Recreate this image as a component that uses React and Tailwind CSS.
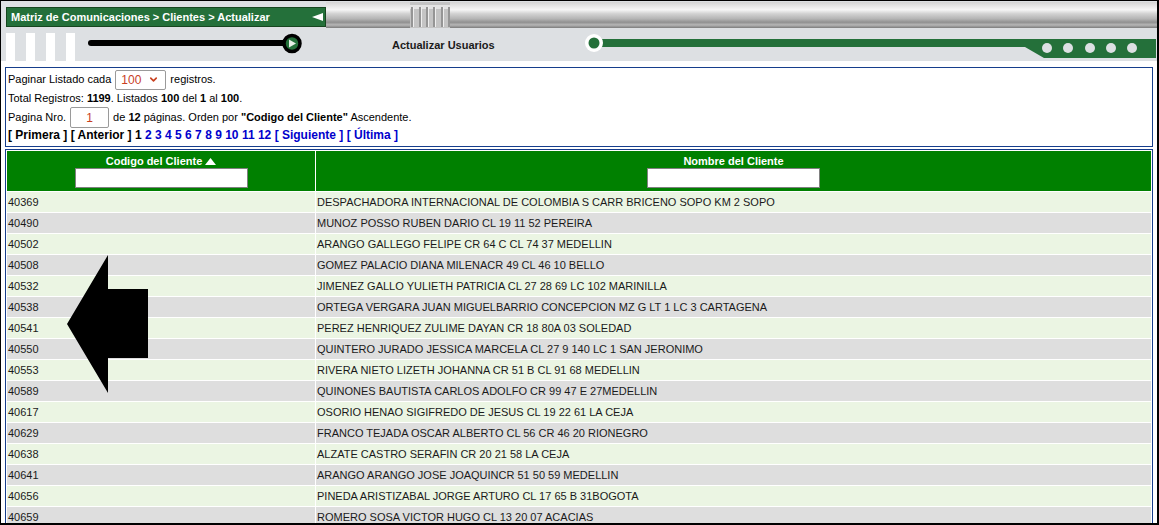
import { ChevronDown } from "lucide-react";

const clientes = [
  ["40369", "DESPACHADORA INTERNACIONAL DE COLOMBIA S CARR BRICENO SOPO KM 2 SOPO"],
  ["40490", "MUNOZ POSSO RUBEN DARIO CL 19 11 52 PEREIRA"],
  ["40502", "ARANGO GALLEGO FELIPE CR 64 C CL 74 37 MEDELLIN"],
  ["40508", "GOMEZ PALACIO DIANA MILENACR 49 CL 46 10 BELLO"],
  ["40532", "JIMENEZ GALLO YULIETH PATRICIA CL 27 28 69 LC 102 MARINILLA"],
  ["40538", "ORTEGA VERGARA JUAN MIGUELBARRIO CONCEPCION MZ G LT 1 LC 3 CARTAGENA"],
  ["40541", "PEREZ HENRIQUEZ ZULIME DAYAN CR 18 80A 03 SOLEDAD"],
  ["40550", "QUINTERO JURADO JESSICA MARCELA CL 27 9 140 LC 1 SAN JERONIMO"],
  ["40553", "RIVERA NIETO LIZETH JOHANNA CR 51 B CL 91 68 MEDELLIN"],
  ["40589", "QUINONES BAUTISTA CARLOS ADOLFO CR 99 47 E 27MEDELLIN"],
  ["40617", "OSORIO HENAO SIGIFREDO DE JESUS CL 19 22 61 LA CEJA"],
  ["40629", "FRANCO TEJADA OSCAR ALBERTO CL 56 CR 46 20 RIONEGRO"],
  ["40638", "ALZATE CASTRO SERAFIN CR 20 21 58 LA CEJA"],
  ["40641", "ARANGO ARANGO JOSE JOAQUINCR 51 50 59 MEDELLIN"],
  ["40656", "PINEDA ARISTIZABAL JORGE ARTURO CL 17 65 B 31BOGOTA"],
  ["40659", "ROMERO SOSA VICTOR HUGO CL 13 20 07 ACACIAS"],
];

const paginas = ["2", "3", "4", "5", "6", "7", "8", "9", "10", "11", "12"];

function Encabezado() {
  return (
    <div className="bg-[#dde0e3]">
      {/* breadcrumb + barra metalica */}
      <div className="flex h-[27px]">
        <div className="ml-[5px] mt-[6px] flex h-[20px] w-[320px] items-center justify-between border border-[#16461f] bg-[#24703a] pl-[4px] pr-[2px]">
          <span className="text-[11px] font-bold leading-none text-white">
            Matriz de Comunicaciones &gt; Clientes &gt; Actualizar
          </span>
          <svg width="11" height="8" viewBox="0 0 11 8">
            <path d="M0 4 L11 0 L11 8 Z" fill="#fff" />
          </svg>
        </div>
        <div className="mt-[1px] flex h-[26px] flex-1 bg-[linear-gradient(to_bottom,#d4d4d4_0%,#ececec_20%,#f6f6f6_30%,#d2d2d2_45%,#b4b4b4_65%,#909090_78%,#b6b6b6_88%,#7c7c7c_100%)]">
          <svg width="40" height="26" viewBox="0 0 40 26" className="ml-[84px]">
            <rect x="0" y="0" width="40" height="26" fill="#c4c4c4" />
            <rect x="0" y="3" width="40" height="4" fill="#e4e4e4" />
            {[1, 9, 16, 23, 31, 38].map((x) => (
              <rect key={x} x={x} y="5" width="2" height="20" fill="#959595" />
            ))}
            {[3, 11, 18, 25, 33].map((x) => (
              <rect key={x} x={x} y="5" width="1" height="20" fill="#eeeeee" />
            ))}
          </svg>
        </div>
      </div>

      {/* controles */}
      <div className="flex h-[33px]">
        <div className="ml-[5px] flex gap-[11px] self-end">
          <div className="h-[28px] w-[9px] bg-white" />
          <div className="h-[28px] w-[9px] bg-white" />
          <div className="h-[28px] w-[9px] bg-white" />
          <div className="h-[28px] w-[9px] bg-white" />
        </div>
        <svg width="218" height="33" viewBox="0 0 218 33" className="ml-[12px]">
          <line x1="4" y1="15" x2="200" y2="15" stroke="#000" strokeWidth="6" strokeLinecap="round" />
          <circle cx="205" cy="15.5" r="8" fill="#24703a" stroke="#000" strokeWidth="3.5" />
          <path d="M202 11.5 L209 15.5 L202 19.5 Z" fill="#e8f0e8" />
        </svg>
        <div className="ml-[87px] pt-[10px] text-[11px] font-bold leading-[14px] text-[#1a1a1a]">
          Actualizar Usuarios
        </div>
        <svg height="33" viewBox="0 0 572 33" width="572" className="ml-[89px]">
          <polygon points="14,11 572,11 572,30 460,30 441,19 14,19" fill="#24703a" />
          <circle cx="10" cy="15" r="9" fill="#fff" />
          <circle cx="10" cy="15" r="5.5" fill="#24703a" />
          {[463, 484, 506, 527, 548].map((cx) => (
            <circle key={cx} cx={cx} cy="20" r="5" fill="#dde0e3" />
          ))}
        </svg>
      </div>
    </div>
  );
}

function Paginacion() {
  return (
    <div className="mx-[4px] mt-[6px] border border-[#163e8c] px-[2px] pt-[2px] text-[11px] text-black">
      <div className="flex h-[19px] items-center">
        <span>Paginar Listado cada</span>
        <div className="ml-[4px] flex h-[20px] w-[51px] items-center justify-between rounded-[2px] border border-[#9a9a9a] bg-white pl-[5px] pr-[6px]">
          <span className="text-[12px] text-[#c8401f]">100</span>
          <ChevronDown size={11} strokeWidth={3.5} color="#c8401f" />
        </div>
        <span className="ml-[4px]">registros.</span>
      </div>
      <div className="flex h-[19px] items-center">
        <span>
          Total Registros: <b>1199</b>. Listados <b>100</b> del <b>1</b> al <b>100</b>.
        </span>
      </div>
      <div className="flex h-[19px] items-center">
        <span>Pagina Nro.</span>
        <div className="ml-[4px] flex h-[21px] w-[39px] items-center justify-center rounded-[2px] border border-[#9a9a9a] bg-white">
          <span className="text-[12px] text-[#c8401f]">1</span>
        </div>
        <span className="ml-[4px]">
          de <b>12</b> páginas. Orden por <b>"Codigo del Cliente"</b> Ascendente.
        </span>
      </div>
      <div className="h-[19px] whitespace-pre text-[12px] font-bold leading-[17px]">
        <span>[ Primera ] [ Anterior ] 1</span>
        {paginas.map((p) => (
          <span key={p}>
            {" "}
            <a className="text-[#0000cc]">{p}</a>
          </span>
        ))}{" "}
        <a className="text-[#0000cc]">[ Siguiente ]</a>{" "}
        <a className="text-[#0000cc]">[ Última ]</a>
      </div>
    </div>
  );
}

function Flecha() {
  return (
    <svg
      width="82"
      height="139"
      viewBox="0 0 82 139"
      className="absolute left-[66px] top-[254px]"
    >
      <polygon points="0,69 41,0 41,34 81,34 81,103 41,103 41,138" fill="#000" />
    </svg>
  );
}

function Triangulo() {
  return (
    <svg width="11" height="7" viewBox="0 0 11 7" className="ml-[3px] inline-block align-[1px]">
      <path d="M0 7 L5.5 0 L11 7 Z" fill="#fff" />
    </svg>
  );
}

function TablaClientes() {
  return (
    <div className="mx-[4px] mt-[2px] border border-[#163e8c]">
      <table className="w-full border-separate border-spacing-[1px] text-[11px]">
        <thead>
          <tr>
            <th className="w-[308px] bg-[#008000] px-0 pb-[3px] pt-[3px] font-bold text-white">
              <div className="flex h-[14px] items-center justify-center leading-[14px]">
                Codigo del Cliente
                <Triangulo />
              </div>
              <div className="flex justify-center">
                <div className="h-[20px] w-[173px] border border-[#808080] bg-white" />
              </div>
            </th>
            <th className="bg-[#008000] px-0 pb-[3px] pt-[3px] font-bold text-white">
              <div className="flex h-[14px] items-center justify-center leading-[14px]">
                Nombre del Cliente
              </div>
              <div className="flex justify-center">
                <div className="h-[20px] w-[173px] border border-[#808080] bg-white" />
              </div>
            </th>
          </tr>
        </thead>
        <tbody>
          {clientes.map(([codigo, nombre], i) => (
            <tr key={codigo} className={i % 2 === 0 ? "bg-[#ebf5e3]" : "bg-[#dedede]"}>
              <td className="h-[20px] p-0 pl-[1px] align-middle leading-[20px] text-[#1a1a1a]">
                {codigo}
              </td>
              <td className="h-[20px] p-0 pl-[1px] align-middle leading-[20px] text-[#1a1a1a]">
                {nombre}
              </td>
            </tr>
          ))}
        </tbody>
      </table>
    </div>
  );
}

export default function App() {
  return (
    <div className="relative h-[525px] w-[1159px] overflow-hidden border-b-2 border-l border-r-2 border-t border-black bg-white font-['Liberation_Sans',Arial,sans-serif]">
      <Encabezado />
      <Paginacion />
      <TablaClientes />
      <Flecha />
    </div>
  );
}
